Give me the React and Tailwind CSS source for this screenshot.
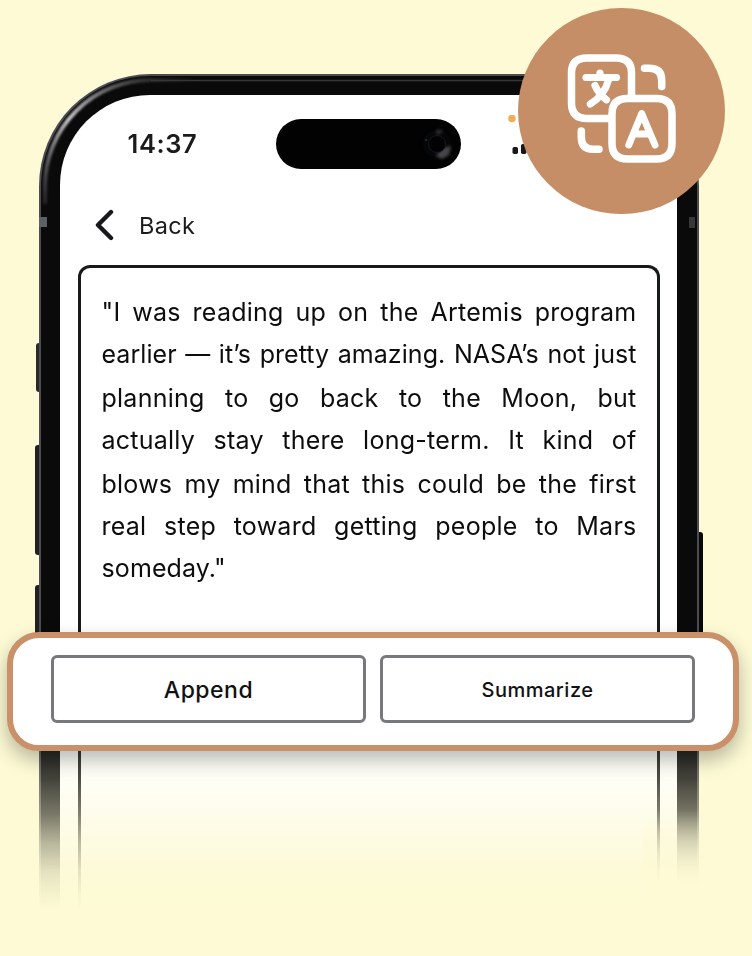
const lines = [
  { text: '"I was reading up on the Artemis program', box: 'h-[42px] tracking-[0.25px]' },
  { text: 'earlier — it’s pretty amazing. NASA’s not just', box: 'h-[44px] tracking-[0.05px]' },
  { text: 'planning to go back to the Moon, but', box: 'h-[42px] tracking-[0.25px]' },
  { text: 'actually stay there long-term. It kind of', box: 'h-[44px] tracking-[0.25px]' },
  { text: 'blows my mind that this could be the first', box: 'h-[42px] tracking-[0.25px]' },
  { text: 'real step toward getting people to Mars', box: 'h-[42px] tracking-[0.25px]' },
];

function Island() {
  return (
    <div className="flex h-[50px] w-[185px] items-center justify-end rounded-full bg-[#020203] pr-[7px]">
      <svg width="34" height="44" viewBox="0 0 34 44" fill="none">
        <defs>
          <filter id="soft"><feGaussianBlur stdDeviation="1.6" /></filter>
        </defs>
        <circle cx="17" cy="22" r="14" fill="#050607" />
        <g filter="url(#soft)">
          <path d="M22 26 L31 24 L29 33 L22 37 L16 34Z" fill="#55565a" opacity=".8" />
          <path d="M15 9 L20 7 L23 10 L18 13Z" fill="#34353a" opacity=".8" />
        </g>
        <circle cx="17" cy="22" r="8.5" fill="#020203" stroke="#17181a" />
        <circle cx="6" cy="18" r="1.2" fill="#26272b" />
      </svg>
    </div>
  );
}

function Phone() {
  return (
    <div className="relative h-[850px] w-[660px] [mask-image:linear-gradient(to_bottom,#000_650px,rgba(0,0,0,.86)_682px,rgba(0,0,0,.76)_705px,rgba(0,0,0,.54)_740px,rgba(0,0,0,.29)_768px,rgba(0,0,0,.1)_797px,rgba(0,0,0,.03)_820px,transparent_836px)] [mask-clip:no-clip]">
      <span className="absolute -left-[3px] top-[269px] h-[49px] w-[5px] rounded-l-[3px] bg-[#29292c]" />
      <span className="absolute -left-[4px] top-[371px] h-[110px] w-[6px] rounded-l-[3px] bg-[#202023]" />
      <span className="absolute -left-[4px] top-[511px] h-[110px] w-[6px] rounded-l-[3px] bg-[#202023]" />
      <span className="absolute -right-[4px] top-[458px] h-[110px] w-[6px] rounded-r-[3px] bg-[#08080a]" />
      <div className="relative h-full overflow-hidden rounded-t-[112px] border-x-2 border-t-2 border-[#4d4c50] bg-[#0a0a0b] pl-[19px] pr-[20px] pt-[19px]">
        <div className="flex h-full flex-col rounded-t-[90px] bg-white pl-[17.5px] pr-[18px] font-['Inter',sans-serif] text-[#1b1b1d]">
          <div className="flex h-[97px] items-center pl-[50px]">
            <div className="w-[148.5px] pt-[2px] text-[25.5px] font-semibold tracking-[0.6px]">14:37</div>
            <Island />
            <svg className="ml-[47px] mt-[-16px]" width="38" height="42" viewBox="0 0 38 42">
              <circle cx="4" cy="3.500" r="3.800" fill="#f2ad55" />
              <rect x="4.500" y="32" width="5.500" height="7" rx="1.800" fill="#161719" />
              <rect x="13" y="29" width="5.500" height="10" rx="1.800" fill="#161719" />
            </svg>
          </div>
          <div className="flex h-[73px] items-center pb-[7px] pl-[17.5px]">
            <svg width="20" height="32" viewBox="0 0 20 32" fill="none">
              <path d="M16 3 L3 16 L16 29" stroke="#17181a" strokeWidth="4.400" strokeLinecap="round" strokeLinejoin="round" />
            </svg>
            <span className="ml-[24px] pt-[1px] text-[23.5px] tracking-[0.3px]">Back</span>
          </div>
          <div className="-mr-[0.5px] flex-1 rounded-t-[12px] border-[3px] border-b-0 border-[#18191a] pl-[21px] pr-[20px] pt-[23px] text-[25px] leading-[42px] text-[#0d0d0e]">
            {lines.map((l) => (
              <p key={l.text} className={'whitespace-nowrap [text-align-last:justify] ' + l.box}>{l.text}</p>
            ))}
            <p className="tracking-[0.1px]">someday."</p>
          </div>
        </div>
      </div>
      <svg className="absolute left-0 top-0" width="660" height="170" viewBox="0 0 660 170" fill="none">
        <defs>
          <linearGradient id="gleam" x1="0" y1="150" x2="150" y2="0" gradientUnits="userSpaceOnUse">
            <stop offset="0" stopColor="#77777a" stopOpacity="0" />
            <stop offset=".45" stopColor="#c8c8ca" />
            <stop offset="1" stopColor="#77777a" stopOpacity="0" />
          </linearGradient>
          <filter id="blur"><feGaussianBlur stdDeviation="1" /></filter>
        </defs>
        <path d="M6 130 V112 A106 106 0 0 1 112 6 H170" stroke="url(#gleam)" strokeWidth="4" filter="url(#blur)" />
        <path d="M112 6.500 H550" stroke="#37373a" strokeWidth="1.500" />
        <rect x="0" y="143" width="8" height="10" fill="#5d6064" />
        <rect x="650" y="143" width="6" height="11" fill="#38383a" />
      </svg>
      <div className="absolute -right-[4px] top-[735px] h-[115px] w-[60px] bg-linear-to-b from-[#fdfad5]/0 to-[#fdfad5] to-65%" />
    </div>
  );
}

function TranslateBadge() {
  return (
    <div className="absolute left-[518px] top-[7.5px] h-[206.5px] w-[207px] rounded-full bg-[#c68e66]">
      <svg className="absolute left-[42px] top-[38.5px]" width="124" height="124" viewBox="560 46 124 124" fill="none" stroke="#fff" strokeWidth="7.500" strokeLinecap="round" strokeLinejoin="round">
        <path d="M587 58 H616 Q631.500 58 631.500 73 V103 Q631.500 118.500 616 118.500 H587 Q571.500 118.500 571.500 103 V73 Q571.500 58 587 58Z" />
        <g strokeWidth="7.200">
          <path d="M586 77.500 H616.500 M600 73 V77" />
          <path d="M608.500 80 C606 90 600 98 590.300 104 M595 85.500 C597.500 91.500 601.500 96 606.500 99.800" />
        </g>
        <path d="M627.500 98.500 H656.500 Q672 98.500 672 114 V143.500 Q672 159 656.500 159 H627.500 Q612 159 612 143.500 V114 Q612 98.500 627.500 98.500Z" fill="#c68e66" />
        <path d="M628.800 145 L641.700 113.500 L655 145 M634 134 H649.500" strokeWidth="7" />
        <path d="M644.500 68.300 H649 Q661.700 68.300 661.700 80 V86.500" />
        <path d="M581.300 131 V137 Q581.300 149.300 593 149.300 H599" />
      </svg>
    </div>
  );
}

export default function App() {
  return (
    <main className="relative h-[956px] w-[752px] overflow-hidden bg-[#fdfad5] pl-[39px] pt-[74px]">
      <Phone />
      <div className="absolute left-[7px] top-[632px] flex h-[119px] w-[732px] gap-[14px] rounded-[32px] border-[6px] border-[#c99069] bg-white px-[38px] pt-[17px] font-['Inter',sans-serif] font-medium text-[#111112] shadow-[0_9px_20px_rgba(0,0,0,0.28)]">
        <button className="h-[68px] w-[316px] rounded-[6px] border-[3px] border-[#77787b] pt-[2px] text-[23px] tracking-[0.5px]">Append</button>
        <button className="h-[68px] w-[316px] rounded-[6px] border-[3px] border-[#77787b] pt-[1px] text-[20px] tracking-[0.5px]">Summarize</button>
      </div>
      <TranslateBadge />
    </main>
  );
}
